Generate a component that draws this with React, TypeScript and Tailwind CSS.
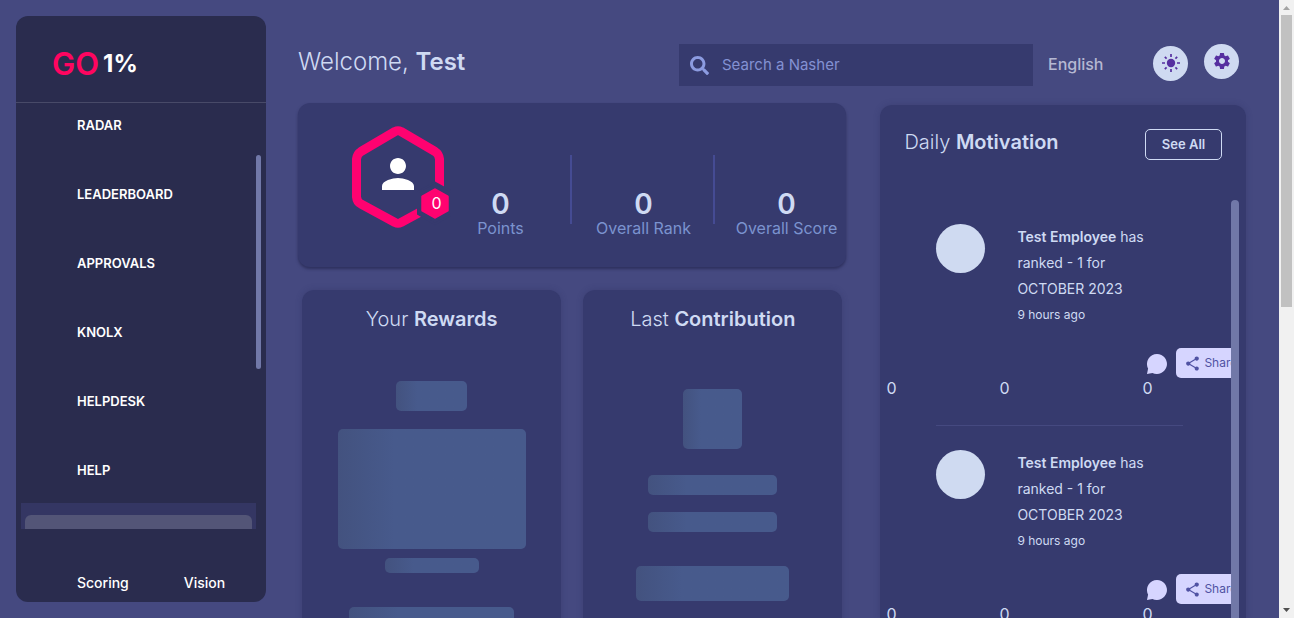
import type { ReactNode } from "react";
import { FaSearch } from "react-icons/fa";
import { MdPerson, MdSettings, MdShare } from "react-icons/md";

const navItems = ["RADAR", "LEADERBOARD", "APPROVALS", "KNOLX", "HELPDESK", "HELP"];

const stats = [
  { label: "Points", value: 0 },
  { label: "Overall Rank", value: 0 },
  { label: "Overall Score", value: 0 },
];

const posts = [
  { id: 1, name: "Test Employee", text: "has ranked - 1 for OCTOBER 2023", time: "9 hours ago" },
  { id: 2, name: "Test Employee", text: "has ranked - 1 for OCTOBER 2023", time: "9 hours ago" },
];

function Sidebar() {
  return (
    <aside className="m-4 flex w-[250px] shrink-0 flex-col overflow-hidden rounded-xl bg-[#2a2c4e] text-white">
      <div className="flex h-[87px] shrink-0 items-center gap-1 border-b border-[#484a68] pt-2 pl-[36px] leading-none">
        <span className="text-[31px] font-semibold text-[#ff0560]">GO</span>
        <span className="text-2xl leading-[31px] font-bold">1%</span>
      </div>
      <div className="flex min-h-0 flex-1 pr-[5px] pl-[5px]">
        <nav className="flex min-w-0 flex-1 flex-col overflow-hidden text-[13px] font-semibold">
          <ul className="flex flex-col gap-[23px]">
            {navItems.map((item) => (
              <li key={item}>
                <a href="#" className="flex h-[46px] items-center pl-14">
                  {item}
                </a>
              </li>
            ))}
          </ul>
          <div className="mt-[9px] h-20 shrink-0 bg-[#343663] px-1 pt-3">
            <div className="h-full rounded-t-md bg-[#535577]" />
          </div>
        </nav>
        <div className="w-[5px] pt-[52px]">
          <div className="h-[214px] rounded-full bg-[#7178a8]" />
        </div>
      </div>
      <div className="flex h-[73px] shrink-0 items-end gap-[55px] pb-[7px] pl-[61px] text-sm leading-6 font-medium">
        <a href="#">Scoring</a>
        <a href="#">Vision</a>
      </div>
    </aside>
  );
}

function SunIcon() {
  return (
    <svg viewBox="0 0 20 20" className="size-5" aria-hidden="true">
      <circle cx="10" cy="10" r="4.2" fill="#562fa0" />
      <path
        d="M10 1v3M10 16v3M1 10h3M16 10h3M3.8 3.8l1.8 1.8M14.4 14.4l1.8 1.8M3.8 16.2l1.8-1.8M14.4 5.6l1.8-1.8"
        stroke="#562fa0"
        strokeWidth="1.7"
      />
    </svg>
  );
}

function Header() {
  return (
    <header className="mb-[17px] flex h-[42px] items-center pr-[7px]">
      <h1 className="flex-1 pb-[6px] text-2xl font-light text-[#cfdaf3]">
        Welcome, <span className="font-semibold">Test</span>
      </h1>
      <div className="flex h-[42px] w-[354px] items-center gap-[13px] bg-[#363a6e] pl-[11px]">
        <FaSearch className="size-[19px] text-[#8c9be0]" />
        <input
          type="search"
          aria-label="Search a Nasher"
          placeholder="Search a Nasher"
          className="min-w-0 flex-1 bg-transparent text-[15px] text-[#cfdaf3] outline-none placeholder:text-[#8391d3]"
        />
      </div>
      <button type="button" className="ml-[15px] w-[105px] pb-[2px] text-left text-base font-medium text-[#b5b8d2]">
        English
      </button>
      <button
        type="button"
        aria-label="Toggle theme"
        className="mb-[4px] flex size-[35px] items-center justify-center rounded-full bg-[#cfdaf1]"
      >
        <SunIcon />
      </button>
      <button
        type="button"
        aria-label="Settings"
        className="mb-[8px] ml-4 flex size-[35px] items-center justify-center rounded-full bg-[#cfdaf1]"
      >
        <MdSettings className="size-5 text-[#562fa0]" />
      </button>
    </header>
  );
}

function HexAvatar() {
  return (
    <svg viewBox="0 0 100 104" className="h-[104px] w-[100px] shrink-0" aria-hidden="true">
      <path
        d="M47 6.5Q50 5 53 6.5L87 26.5Q91 29 91.500 34V72Q91 77 87 79L53 97.500Q50 99 47 97.500L13 79Q9 77 8.500 72V34Q9 29 13 26.5Z"
        transform="translate(-3 0)"
        fill="none"
        stroke="#ff0270"
        strokeWidth="9"
        strokeLinejoin="round"
      />
      <path d="M84 57.500L101 67V89L84 99L67 89V67Z" fill="#363a6e" stroke="#363a6e" strokeWidth="2" />
      <path
        d="M84 64.500L96.500 71.500V85.500L84 92.500L71.500 85.500V71.500Z"
        fill="#ff0270"
        stroke="#ff0270"
        strokeWidth="2.500"
        strokeLinejoin="round"
      />
      <text x="85.500" y="84" textAnchor="middle" fontSize="16" fill="#fff">
        0
      </text>
    </svg>
  );
}

function StatsCard() {
  return (
    <section className="flex h-[164px] shrink-0 overflow-hidden rounded-xl bg-[#363a6e] shadow-[0_2px_3px_rgba(30,32,70,0.6)]">
      <div className="relative w-[129px] shrink-0 pt-[22px] pl-[53px]">
        <HexAvatar />
        <MdPerson className="absolute top-[47px] left-[76px] size-12 text-white" />
      </div>
      <dl className="flex pt-[52px] text-center">
        {stats.map((s) => (
          <div
            key={s.label}
            className="flex h-[69px] w-[143px] shrink-0 flex-col-reverse justify-start border-l-2 border-[#454b93] pl-[2px] first:border-transparent"
          >
            <dt className="-mb-4 text-base leading-6 whitespace-nowrap text-[#7b93cf]">{s.label}</dt>
            <dd className="text-[28px] leading-6 font-semibold text-[#cfdaf3]">{s.value}</dd>
          </div>
        ))}
      </dl>
    </section>
  );
}

function Bone({ className }: { className: string }) {
  return (
    <div
      className={`shrink-0 rounded-[5px] bg-linear-to-r from-[#43527f] via-[#475a8c] via-30% to-[#475a8c] ${className}`}
    />
  );
}

function SkeletonCard({ title, strong, children }: { title: string; strong: string; children: ReactNode }) {
  return (
    <section className="flex flex-col items-center rounded-t-xl bg-[#363a6e] pt-3 shadow-[0_0_6px_rgba(40,43,90,0.3)]">
      <h2 className="text-xl leading-[34px] font-light text-[#cfdaf3]">
        {title} <span className="font-semibold">{strong}</span>
      </h2>
      {children}
    </section>
  );
}

function CommentIcon() {
  return (
    <svg viewBox="0 0 20 20" className="size-5 text-[#d6d5ff]" fill="currentColor" aria-hidden="true">
      <path d="M10 0a10 10 0 1 1-4.600 18.900L0 20l1.100-5.400A10 10 0 0 1 10 0Z" />
    </svg>
  );
}

function Post({ post }: { post: (typeof posts)[number] }) {
  return (
    <li className="pt-6">
      <div className="flex gap-8 pl-14">
        <div className="size-[49px] shrink-0 rounded-full bg-[#cfdaf1]" />
        <div className="w-[146px] text-sm leading-[26px] text-[#cfdaf3]">
          <p>
            <strong className="font-semibold">{post.name}</strong> {post.text}
          </p>
          <p className="text-xs leading-[26px]">{post.time}</p>
        </div>
      </div>
      <div className="mt-5 grid grid-cols-[113px_143px_1fr] items-end pb-[27px] pl-[6px] text-base leading-5 text-[#cfdaf3]">
        <span>0</span>
        <span>0</span>
        <div className="min-w-0">
          <div className="flex items-center gap-[9px] pl-[5px]">
            <button type="button" aria-label="Comment" className="shrink-0 pt-[2px]">
              <CommentIcon />
            </button>
            <button
              type="button"
              className="flex h-[30px] shrink-0 items-center gap-[3px] rounded-[5px] bg-[#d6d5ff] px-2 text-xs text-[#5052a3]"
            >
              <MdShare className="size-[17px]" />
              Share
            </button>
          </div>
          <span className="block">0</span>
        </div>
      </div>
      <hr className="mr-12 ml-14 border-[#454980]" />
    </li>
  );
}

function MotivationCard() {
  return (
    <section className="mt-[2px] flex min-h-0 flex-col overflow-hidden rounded-t-xl bg-[#363a6e] pt-6 shadow-[0_0_6px_rgba(40,43,90,0.3)]">
      <div className="mb-10 flex shrink-0 items-start justify-between px-6">
        <h2 className="text-xl leading-[26px] font-light text-[#cfdaf3]">
          Daily <span className="font-semibold">Motivation</span>
        </h2>
        <button
          type="button"
          className="h-[31px] w-[77px] rounded-[5px] border border-[#cfdaf3] text-[13px] font-semibold text-[#cfdaf3]"
        >
          See All
        </button>
      </div>
      <div className="flex min-h-0 flex-1 pr-[7px]">
        <ul className="min-w-0 flex-1 overflow-hidden">
          {posts.map((p) => (
            <Post key={p.id} post={p} />
          ))}
        </ul>
        <div className="w-2 shrink-0 rounded-t-full bg-[#7178a8]" />
      </div>
    </section>
  );
}

function WindowScrollbar() {
  return (
    <div className="flex w-[15px] shrink-0 flex-col items-center bg-[#f1f1f1]" aria-hidden="true">
      <svg viewBox="0 0 15 15" className="h-[15px] w-[15px]">
        <path d="M4 10l3.500-4L11 10z" fill="#a3a3a3" />
      </svg>
      <div className="h-[292px] w-[11px] bg-[#c1c1c1]" />
      <svg viewBox="0 0 15 15" className="mt-auto h-[15px] w-[15px]">
        <path d="M4 5l3.500 4L11 5z" fill="#505050" />
      </svg>
    </div>
  );
}

export default function App() {
  return (
    <div className="flex h-screen overflow-hidden bg-[#454980] font-['Inter',sans-serif]">
      <Sidebar />
      <main className="flex min-w-0 flex-1 flex-col pt-11 pr-[33px] pl-4">
        <Header />
        <div className="grid min-h-0 flex-1 grid-cols-[3fr_2fr] grid-rows-[minmax(0,1fr)] gap-[34px]">
          <div className="flex min-h-0 min-w-0 flex-col gap-[23px]">
            <StatsCard />
            <div className="grid min-h-0 flex-1 grid-cols-2 gap-[22px] px-1">
              <SkeletonCard title="Your" strong="Rewards">
                <Bone className="mt-[45px] h-[30px] w-[71px]" />
                <Bone className="mt-[18px] h-[120px] w-[188px]" />
                <Bone className="mt-[9px] h-[15px] w-[94px]" />
                <Bone className="mt-[34px] h-[30px] w-[165px]" />
              </SkeletonCard>
              <SkeletonCard title="Last" strong="Contribution">
                <Bone className="mt-[53px] h-[60px] w-[59px]" />
                <Bone className="mt-[26px] h-5 w-[129px]" />
                <Bone className="mt-[17px] h-5 w-[129px]" />
                <Bone className="mt-[34px] h-[35px] w-[153px]" />
              </SkeletonCard>
            </div>
          </div>
          <MotivationCard />
        </div>
      </main>
      <WindowScrollbar />
    </div>
  );
}
